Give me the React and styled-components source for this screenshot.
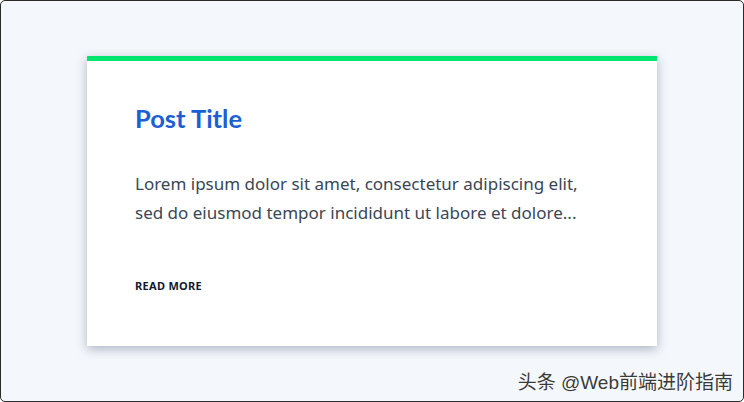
import React from "react";
import styled, { createGlobalStyle } from "styled-components";

const Global = createGlobalStyle`
  html, body { margin: 0; padding: 0; background: #ffffff; }
  * { box-sizing: border-box; }
`;

const Frame = styled.div`
  width: 744px;
  height: 402px;
  border: 1px solid #2b2b2b;
  border-radius: 5px;
  background: #f4f7fc;
  display: flex;
  align-items: center;
  justify-content: center;
  position: relative;
  overflow: hidden;
`;

const Card = styled.article`
  width: 570px;
  height: 290px;
  background: #ffffff;
  border-top: 5px solid #00e56e;
  box-shadow: 0 3px 10px rgba(40, 55, 85, 0.35);
  padding: 42px 48px 0 48px;
  display: flex;
  flex-direction: column;
`;

const Title = styled.h2`
  margin: 0;
  font-family: "Lato", "Noto Sans", sans-serif;
  font-weight: 700;
  font-size: 25.5px;
  line-height: 30px;
  color: #1c5fd4;
`;

const Body = styled.p`
  margin: 36px 0 0 0;
  font-family: "Noto Sans", "Open Sans", sans-serif;
  font-size: 17px;
  line-height: 29px;
  color: #3b4656;
`;

const ReadMore = styled.a`
  margin-top: 51px;
  font-family: "Noto Sans", "Open Sans", sans-serif;
  font-weight: 700;
  font-size: 11px;
  letter-spacing: 0.3px;
  color: #0f1b2e;
  text-transform: uppercase;
  text-decoration: none;
`;

const Watermark = styled.div`
  position: absolute;
  right: 10px;
  bottom: 7px;
  font-family: "Liberation Sans", "Noto Sans CJK SC", sans-serif;
  font-size: 19px;
  color: #3a3a3a;
  text-shadow: 0 0 2px #ffffff, 0 0 1px #ffffff;
`;

export default function App() {
  return (
    <>
      <Global />
      <Frame>
        <Card>
          <Title>Post Title</Title>
          <Body>
            Lorem ipsum dolor sit amet, consectetur adipiscing elit,
            <br />
            sed do eiusmod tempor incididunt ut labore et dolore...
          </Body>
          <ReadMore href="#">Read more</ReadMore>
        </Card>
        <Watermark>头条 @Web前端进阶指南</Watermark>
      </Frame>
    </>
  );
}
